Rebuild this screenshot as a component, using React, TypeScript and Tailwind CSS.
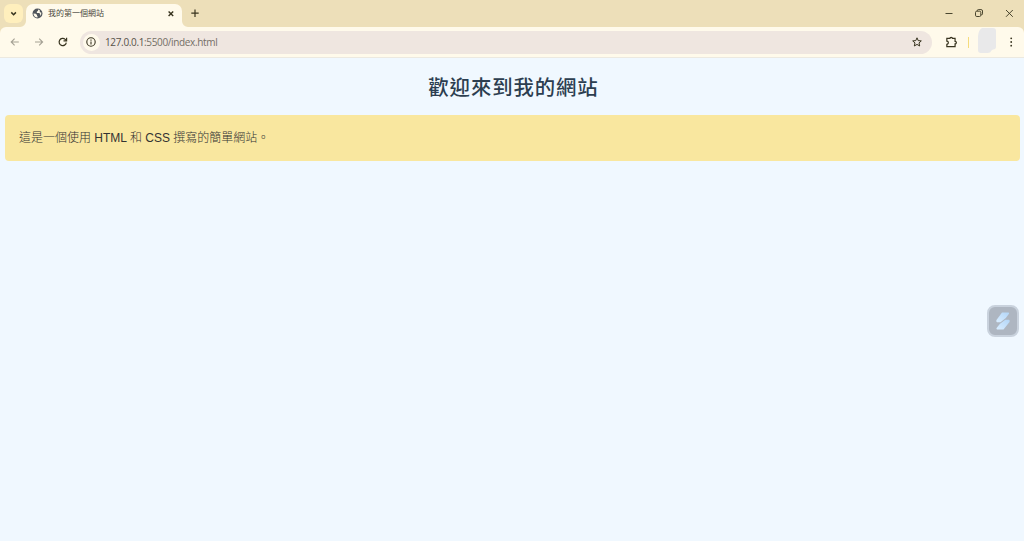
import { ReactNode } from 'react';

interface IconProps {
  className?: string;
  width?: number;
  children: ReactNode;
}

// every icon is drawn on a 12x12 grid
function Icon({ className = 'h-3 w-3', width = 1.2, children }: IconProps) {
  return (
    <svg
      viewBox="0 0 12 12"
      fill="none"
      stroke="currentColor"
      strokeWidth={width}
      className={`shrink-0 ${className}`}
    >
      {children}
    </svg>
  );
}

function TabEar({ className = '' }: { className?: string }) {
  return (
    <svg
      viewBox="0 0 6 6"
      className={`h-1.5 w-1.5 shrink-0 self-end text-[#fffaeb] ${className}`}
    >
      <path d="M6 0v6H0a6 6 0 0 0 6-6z" fill="currentColor" />
    </svg>
  );
}

function TabStrip() {
  return (
    <div className="flex h-[27px] bg-[#eddfb9] text-[#38341f]">
      <button className="ml-1 mt-1 flex h-[19px] w-[19px] items-center justify-center rounded-md bg-[#ffefbd]">
        <Icon width={1.5}>
          <path d="M3.3 4.4L5.6 6.7l2.3-2.3" />
        </Icon>
      </button>
      <TabEar className="-ml-[3px]" />
      <div className="mt-1 flex w-[156px] items-center rounded-t-[7px] bg-[#fffaeb] pb-1 pl-[6px]">
        <Icon className="h-[11px] w-[11px] text-[#50555c]">
          <circle cx="6" cy="6" r="5.4" fill="currentColor" stroke="none" />
          <path
            d="M6.6 1.6v1.3L5.3 4.2v1.2h2.6l1 1.2v2.2A4.2 4.2 0 0 0 10.1 5L8.5 4.6V2.4zM1.6 6.1l2.5.1 1.4 1.4v1.2H6v1.6A4.3 4.3 0 0 1 1.6 6.1z"
            fill="#fffaeb"
            stroke="none"
          />
        </Icon>
        <span className="ml-[5px] whitespace-nowrap text-[8px] leading-none text-[#4a473b]">
          我的第一個網站
        </span>
        <Icon className="ml-auto mr-[5px] h-3 w-3" width={1.4}>
          <path d="M3.6 3.4l4.6 4.6M8.2 3.4L3.6 8" />
        </Icon>
      </div>
      <TabEar className="-scale-x-100" />
      <Icon className="ml-[1px] mt-[7px] h-3 w-3" width={1.2}>
        <path d="M6 2.5v7.4M2.3 6.2h7.4" />
      </Icon>
      <div className="ml-auto mr-[9px] mt-[7px] flex gap-[18px]">
        <Icon width={0.9}>
          <path d="M2.5 6.5h7" />
        </Icon>
        <Icon width={0.9}>
          <rect x="2.5" y="4.2" width="5.3" height="5.3" rx="1.3" />
          <path d="M4.3 4V3.6a1 1 0 0 1 1-1h2.8a1.4 1.4 0 0 1 1.4 1.4v2.8a1 1 0 0 1-1 1h-.4" />
        </Icon>
        <Icon width={0.9}>
          <path d="M3 3l6.8 6.8M9.8 3L3 9.8" />
        </Icon>
      </div>
    </div>
  );
}

function Toolbar() {
  return (
    <div className="bg-[#eddfb9]">
      <div className="flex h-[31px] items-center rounded-t-md border-b border-[#ece9e0] bg-[#fffaeb] pl-[9px] pr-[7px] text-[#38341f]">
        <Icon className="h-3 w-3 text-[#a5a194]" width={1.1}>
          <path d="M9.8 6H2.2M5.6 2.6L2.2 6l3.4 3.4" />
        </Icon>
        <Icon className="ml-[12px] h-3 w-3 text-[#a5a194]" width={1.1}>
          <path d="M2 6h7.6M6.2 2.6L9.6 6 6.2 9.4" />
        </Icon>
        <Icon className="ml-[12px] h-3 w-3" width={1.2}>
          <path d="M9.3 6.6A3.6 3.6 0 1 1 8.2 3.4L9.3 4.5" />
          <path d="M9.6 1.8v3.1H6.5" />
        </Icon>
        <div className="ml-[11px] flex h-[23px] w-[852px] shrink-0 items-center rounded-full bg-[#efe6e0] pl-[3px] pr-[9px]">
          <div className="flex h-[17px] w-[17px] items-center justify-center rounded-full bg-[#fffaeb]">
            <Icon className="-ml-px h-3 w-3" width={1.1}>
              <circle cx="6" cy="6" r="4.2" />
              <path d="M6 5.5v2.9M6 3.6v1.1" />
            </Icon>
          </div>
          <span className="ml-[5px] font-['Open_Sans',sans-serif] text-[10px] leading-none tracking-[-0.35px] text-[#746e66]">
            <span className="text-[#57524a]">127.0.0.1</span>:5500/index.html
          </span>
          <Icon className="ml-auto h-3 w-3" width={1}>
            <path d="M6 1.8l1.2 2.8 3.1.3-2.3 2 .7 3.1L6 8.4l-2.7 1.6.7-3.1-2.3-2 3.1-.3z" />
          </Icon>
        </div>
        <Icon className="ml-[13px] h-[13px] w-[13px]" width={1.1}>
          <path d="M1.7 2.2h2.8a1.2 1 0 0 1 2.4 0h2.4v2.7a1.2 1.2 0 0 1 0 2.4v2.5H1.7V7.6a1.4 1.4 0 0 0 0-2.8z" />
        </Icon>
        <div className="ml-[10px] h-[11px] w-px shrink-0 bg-[#f5dc7d]" />
        {/* blurred-out profile picture */}
        <svg viewBox="0 0 20 27" className="-mt-[3px] ml-2 h-[27px] w-5 shrink-0 text-[#e9e9ea]">
          <path
            d="M5 1h11q3 0 3 3v16q0 2-3 2.500l-1.500 1q-1 2.500-4 2.500H4q-3 0-3-3V9Q1.500 3 5 1z"
            fill="currentColor"
          />
        </svg>
        <Icon className="ml-2 h-3 w-3">
          <g fill="currentColor" stroke="none">
            <circle cx="6.200" cy="2.3" r="0.900" />
            <circle cx="6.200" cy="6" r="0.900" />
            <circle cx="6.200" cy="9.700" r="0.900" />
          </g>
        </Icon>
      </div>
    </div>
  );
}

export default function App() {
  return (
    <div className="flex h-[541px] w-[1024px] flex-col overflow-hidden bg-[#f0f8ff] font-['Liberation_Sans','Noto_Sans_CJK_TC',sans-serif]">
      <TabStrip />
      <Toolbar />
      <main className="relative flex-1 pl-[5px] pr-1 pt-[15px]">
        <h1 className="pl-[2px] text-center text-[20.4px] font-medium leading-[30px] tracking-[0.9px] text-[#2c3e50]">
          歡迎來到我的網站
        </h1>
        <div className="mt-3 h-[46px] rounded bg-[#f9e79f] px-[14px] pt-[14px]">
          <p className="text-[12px] font-light leading-[18px] text-[#333333]">
            這是一個使用 HTML 和 CSS 撰寫的簡單網站。
          </p>
        </div>

        {/* floating extension button */}
        <button className="absolute right-[5px] top-[247px] flex h-8 w-8 items-center justify-center rounded-lg border-2 border-[#c9d2dd] bg-[#aeb6c1]">
          <svg viewBox="0 0 18 20" className="h-5 w-[18px]">
            <defs>
              <linearGradient id="wing" x1="0" y1="1" x2="1" y2="0">
                <stop offset="0" stopColor="#d9edff" />
                <stop offset="1" stopColor="#b3d6f8" />
              </linearGradient>
            </defs>
            <path
              d="M8 1.500h6.500q1 .3.500 1.300l-3.200 4.200-5.300 4.200H3q-1.300-.9-.5-2.200z"
              fill="url(#wing)"
            />
            <path
              d="M9.500 18.500H3q-1-.4-.4-1.400l3.400-4.400 5.300-4h3.700q1.300.9.500 2.200z"
              fill="url(#wing)"
            />
          </svg>
        </button>
      </main>
    </div>
  );
}
